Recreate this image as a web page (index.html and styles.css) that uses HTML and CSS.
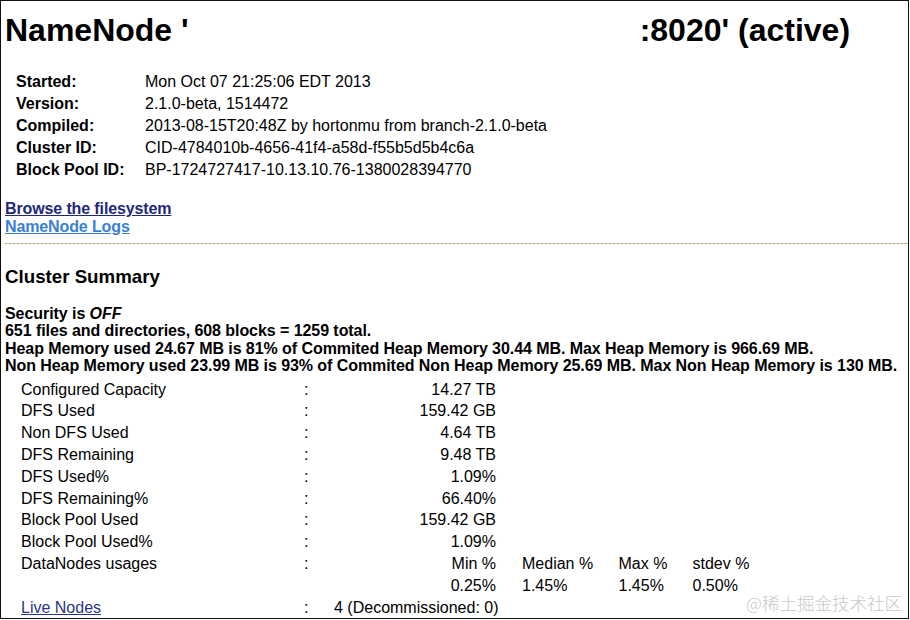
FILE: index.html
```html
<!DOCTYPE html>
<html lang="en">
<head>
<meta charset="utf-8">
<title>NameNode</title>
<link rel="stylesheet" href="styles.css">
</head>
<body>
<div class="frame">
  <h1 class="title">NameNode '<span class="host"></span>:8020' (active)</h1>

  <div class="info">
    <div class="info-key">Started:</div><div class="info-val">Mon Oct 07 21:25:06 EDT 2013</div>
    <div class="info-key">Version:</div><div class="info-val">2.1.0-beta, 1514472</div>
    <div class="info-key">Compiled:</div><div class="info-val">2013-08-15T20:48Z by hortonmu from branch-2.1.0-beta</div>
    <div class="info-key">Cluster ID:</div><div class="info-val">CID-4784010b-4656-41f4-a58d-f55b5d5b4c6a</div>
    <div class="info-key">Block Pool ID:</div><div class="info-val">BP-1724727417-10.13.10.76-1380028394770</div>
  </div>

  <div class="links">
    <a class="link link-browse" href="#">Browse the filesystem</a>
    <a class="link link-logs" href="#">NameNode Logs</a>
  </div>

  <div class="rule"></div>

  <h3 class="section">Cluster Summary</h3>

  <div class="summary">
    <div>Security is <em>OFF</em></div>
    <div>651 files and directories, 608 blocks = 1259 total.</div>
    <div>Heap Memory used 24.67 MB is 81% of Commited Heap Memory 30.44 MB. Max Heap Memory is 966.69 MB.</div>
    <div>Non Heap Memory used 23.99 MB is 93% of Commited Non Heap Memory 25.69 MB. Max Non Heap Memory is 130 MB.</div>
  </div>

  <div class="stats">
    <div class="c1">Configured Capacity</div><div class="c2">:</div><div class="c3">14.27 TB</div>
    <div class="c1">DFS Used</div><div class="c2">:</div><div class="c3">159.42 GB</div>
    <div class="c1">Non DFS Used</div><div class="c2">:</div><div class="c3">4.64 TB</div>
    <div class="c1">DFS Remaining</div><div class="c2">:</div><div class="c3">9.48 TB</div>
    <div class="c1">DFS Used%</div><div class="c2">:</div><div class="c3">1.09%</div>
    <div class="c1">DFS Remaining%</div><div class="c2">:</div><div class="c3">66.40%</div>
    <div class="c1">Block Pool Used</div><div class="c2">:</div><div class="c3">159.42 GB</div>
    <div class="c1">Block Pool Used%</div><div class="c2">:</div><div class="c3">1.09%</div>
    <div class="c1">DataNodes usages</div><div class="c2">:</div><div class="c3">Min %</div><div class="c4">Median %</div><div class="c5">Max %</div><div class="c6">stdev %</div>
    <div class="c1"></div><div class="c2"></div><div class="c3">0.25%</div><div class="c4">1.45%</div><div class="c5">1.45%</div><div class="c6">0.50%</div>
    <div class="c1"><a class="live" href="#">Live Nodes</a></div><div class="c2">:</div><div class="c3">4 (Decommissioned: 0)</div>
  </div>

  <div class="watermark">@稀土掘金技术社区</div>
</div>
</body>
</html>
```

FILE: styles.css
```css
html, body {
  margin: 0;
  padding: 0;
  background: #fff;
}

body {
  font-family: "Liberation Sans", Arial, Helvetica, sans-serif;
  font-size: 16px;
  color: #000;
}

.frame {
  position: relative;
  box-sizing: border-box;
  width: 909px;
  height: 619px;
  border: 1px solid #111;
  padding: 0 0 0 4px;
  overflow: hidden;
}

.title {
  margin: 11px 0 0 0;
  font-size: 32px;
  line-height: 37px;
  font-weight: bold;
  white-space: nowrap;
}

.host {
  display: inline-block;
  width: 451px;
}

.info {
  display: grid;
  grid-template-columns: 129px auto;
  grid-auto-rows: 22px;
  line-height: 22px;
  margin: 22px 0 0 11px;
}

.info-key {
  font-weight: bold;
}

.links {
  display: flex;
  flex-direction: column;
  align-items: flex-start;
  margin-top: 19px;
  line-height: 17.6px;
  font-weight: bold;
  letter-spacing: -0.12px;
}

.link {
  text-decoration: underline;
}

.link-browse {
  color: #23287a;
}

.link-logs {
  color: #3a7fd2;
}

.rule {
  height: 1px;
  margin: 8px 0 0 0;
  background: repeating-linear-gradient(90deg, #a89f78 0 2px, #dcd7c4 2px 4px);
}

.section {
  margin: 22px 0 0 0;
  font-size: 18.72px;
  line-height: 21.5px;
  font-weight: bold;
}

.summary {
  margin-top: 17px;
  line-height: 17.6px;
  font-weight: bold;
  white-space: nowrap;
  letter-spacing: -0.065px;
}

.stats {
  display: grid;
  grid-template-columns: 283px 30px 162px 26px 96.5px 74px auto;
  grid-auto-rows: 21.8px;
  line-height: 21.8px;
  margin: 3.5px 0 0 16px;
  white-space: nowrap;
}

.c1 { grid-column: 1; }
.c2 { grid-column: 2; }
.c3 { grid-column: 3; text-align: right; }
.c4 { grid-column: 5; }
.c5 { grid-column: 6; }
.c6 { grid-column: 7; }

.live {
  color: #2a3488;
  text-decoration: underline;
}

.watermark {
  position: absolute;
  right: 6px;
  bottom: 4px;
  font-family: "Noto Sans CJK SC", sans-serif;
  font-size: 17.5px;
  font-weight: 300;
  line-height: 22px;
  color: #c9c9c9;
  white-space: nowrap;
}
```
